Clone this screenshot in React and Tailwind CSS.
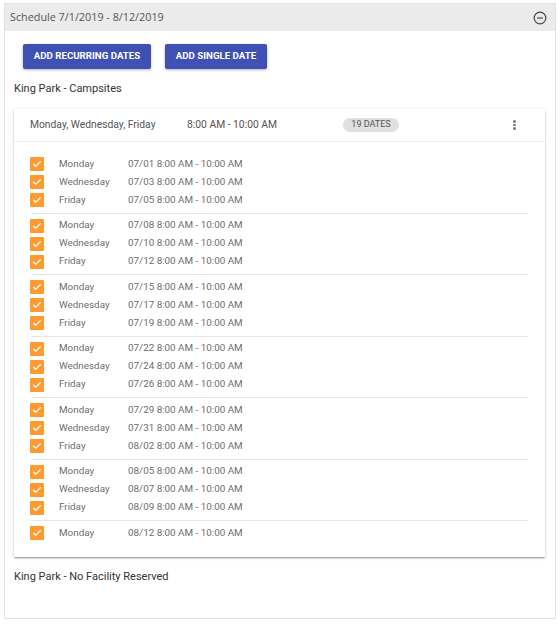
import React from 'react';

const groups = [
  [['Monday', '07/01'], ['Wednesday', '07/03'], ['Friday', '07/05']],
  [['Monday', '07/08'], ['Wednesday', '07/10'], ['Friday', '07/12']],
  [['Monday', '07/15'], ['Wednesday', '07/17'], ['Friday', '07/19']],
  [['Monday', '07/22'], ['Wednesday', '07/24'], ['Friday', '07/26']],
  [['Monday', '07/29'], ['Wednesday', '07/31'], ['Friday', '08/02']],
  [['Monday', '08/05'], ['Wednesday', '08/07'], ['Friday', '08/09']],
  [['Monday', '08/12']],
];

const CheckBox = () => (
  <span className="w-[14px] h-[14px] bg-[#ff9a33] rounded-[1px] flex items-center justify-center shrink-0">
    <svg width="10" height="10" viewBox="0 0 24 24" fill="none" stroke="#fff" strokeWidth="3" strokeLinecap="round" strokeLinejoin="round">
      <path d="M4 12.5l5 5L20 6.5" />
    </svg>
  </span>
);

const DateRow = ({ day, date }) => (
  <div className="h-[18px] flex items-center text-[9.85px] text-[#6e6e6e]">
    <CheckBox />
    <span className="ml-[15px] w-[69px]">{day}</span>
    <span>{date} 8:00 AM - 10:00 AM</span>
  </div>
);

export default function App() {
  return (
    <div className="w-[560px] h-[626px] pt-[3px] px-[4px] bg-white" style={{ fontFamily: 'Roboto, "Liberation Sans", sans-serif' }}>
      <div className="h-[616px] border border-[#e2e2e2] flex flex-col">
        {/* header */}
        <div className="h-[27px] bg-[#ebebeb] flex items-center justify-between pl-[5px] pr-[8px]">
          <span className="text-[10.8px] text-[#555]" style={{ fontFamily: '"Open Sans", "Liberation Sans", sans-serif' }}>
            Schedule 7/1/2019 - 8/12/2019
          </span>
          <svg width="14" height="14" viewBox="0 0 24 24" fill="none" stroke="#444" strokeWidth="2">
            <circle cx="12" cy="12" r="10" />
            <path d="M7 12h10" />
          </svg>
        </div>

        <div className="px-[9px]">
          <div className="mt-[13px] ml-[9px] flex gap-[14px]">
            <button className="h-[25px] w-[128px] bg-[#3f51b5] text-white text-[9.7px] font-bold rounded-[2px] shadow-[0_1px_3px_rgba(0,0,0,0.3)]">
              ADD RECURRING DATES
            </button>
            <button className="h-[25px] w-[102px] bg-[#3f51b5] text-white text-[9.7px] font-bold rounded-[2px] shadow-[0_1px_3px_rgba(0,0,0,0.3)]">
              ADD SINGLE DATE
            </button>
          </div>

          <div className="mt-[12px] text-[11px] leading-[16px] text-[#333]">King Park - Campsites</div>

          {/* card */}
          <div className="mt-[12px] mr-[1px] bg-white shadow-[0_1px_3px_rgba(0,0,0,0.2),0_1px_1px_rgba(0,0,0,0.14),0_2px_1px_-1px_rgba(0,0,0,0.12)]">
            <div className="h-[33px] border-b border-[#f0f0f0] flex items-center pl-[16px] text-[10.3px] text-[#555]">
              <span className="w-[157px]">Monday, Wednesday, Friday</span>
              <span className="w-[156px]">8:00 AM - 10:00 AM</span>
              <span className="h-[14px] w-[56px] rounded-full bg-[#e0e0e0] flex items-center justify-center text-[9px] text-[#555]">
                19 DATES
              </span>
              <span className="ml-[114px] flex flex-col gap-[1px]">
                <span className="w-[2.5px] h-[2.5px] rounded-full bg-[#777]" />
                <span className="w-[2.5px] h-[2.5px] rounded-full bg-[#777]" />
                <span className="w-[2.5px] h-[2.5px] rounded-full bg-[#777]" />
              </span>
            </div>
            <div className="pt-[10px] pb-[11px] pl-[16px] pr-[17px]">
              {groups.map((g, i) => (
                <div key={i} className={`pt-[3px] pb-[3.5px] ${i > 0 ? 'border-t border-[#e6e6e6] ml-[1px]' : ''}`}>
                  <div className={i > 0 ? '-ml-[1px]' : ''}>
                    {g.map(([day, date]) => (
                      <DateRow key={date} day={day} date={date} />
                    ))}
                  </div>
                </div>
              ))}
            </div>
          </div>

          <div className="mt-[12.5px] text-[11px] leading-[16px] text-[#333]">King Park - No Facility Reserved</div>
        </div>
      </div>
    </div>
  );
}
